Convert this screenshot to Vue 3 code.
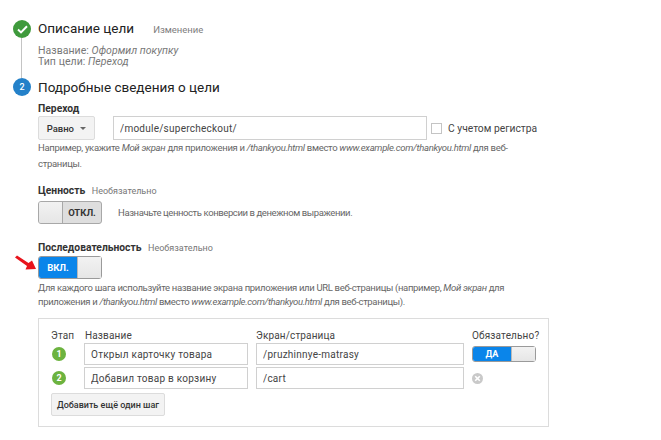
<template>
  <div class="page">
    <section class="step first">
      <div class="rail">
        <span class="dot done">
          <svg width="11" height="9" viewBox="0 0 11 9"><path d="M1 4.6 4 7.4 10 1.2" fill="none" stroke="#fff" stroke-width="2" /></svg>
        </span>
        <span class="line"></span>
      </div>
      <div class="body">
        <div class="head">
          <h2>Описание цели</h2>
          <a class="edit">Изменение</a>
        </div>
        <p class="meta">Название: <i>Оформил покупку</i></p>
        <p class="meta">Тип цели: <i>Переход</i></p>
      </div>
    </section>

    <section class="step second">
      <div class="rail">
        <span class="dot num">2</span>
      </div>
      <div class="body">
        <h2>Подробные сведения о цели</h2>

        <div class="label goal-label">Переход</div>
        <div class="match-row">
          <button class="select">Равно <span class="caret"></span></button>
          <input class="text url" value="/module/supercheckout/" />
          <span class="check"></span>
          <span class="check-label">С учетом регистра</span>
        </div>
        <p class="help first-help">Например, укажите <i>Мой экран</i> для приложения и <i>/thankyou.html</i> вместо <i>www.example.com/thankyou.html</i> для веб-<br />страницы.</p>

        <div class="label value-label">Ценность <span class="opt">Необязательно</span></div>
        <div class="value-row">
          <div class="toggle off">
            <span class="knob"></span>
            <span class="state">ОТКЛ.</span>
          </div>
          <span class="value-note">Назначьте ценность конверсии в денежном выражении.</span>
        </div>

        <div class="label seq-label">Последовательность <span class="opt">Необязательно</span></div>
        <div class="toggle on">
          <span class="state">ВКЛ.</span>
          <span class="knob"></span>
          <svg class="arrow" width="24" height="17" viewBox="0 0 24 17">
            <path d="M1 2.5 3 .5 14.5 8 18 5.5 22 14 11.5 14.5 13 11Z" fill="#e8141c" />
          </svg>
        </div>
        <p class="help seq-help">Для каждого шага используйте название экрана приложения или URL веб-страницы (например, <i>Мой экран</i> для<br />приложения и <i>/thankyou.html</i> вместо <i>www.example.com/thankyou.html</i> для веб-страницы).</p>

        <div class="steps-box">
          <div class="grid">
            <span class="col">Этап</span>
            <span class="col name-col">Название</span>
            <span class="col">Экран/страница</span>
            <span class="col">Обязательно?</span>

            <template v-for="(row, i) in rows" :key="i">
              <span class="badge-cell"><span class="badge">{{ i + 1 }}</span></span>
              <input class="text cell" :value="row.name" />
              <input class="text cell" :value="row.path" />
              <span class="end-cell">
                <span v-if="i === 0" class="toggle on small">
                  <span class="state">ДА</span>
                  <span class="knob"></span>
                </span>
                <svg v-else class="remove" width="11" height="11" viewBox="0 0 11 11">
                  <circle cx="5.5" cy="5.5" r="5.5" fill="#c9c9c9" />
                  <path d="M3.2 3.2 7.8 7.8M7.8 3.2 3.2 7.8" stroke="#fff" stroke-width="1.6" />
                </svg>
              </span>
            </template>
          </div>
          <button class="add">Добавить ещё один шаг</button>
        </div>
      </div>
    </section>
  </div>
</template>

<script setup>
const rows = [
  { name: 'Открыл карточку товара', path: '/pruzhinnye-matrasy' },
  { name: 'Добавил товар в корзину', path: '/cart' }
]
</script>

<style>
html, body { background: #fff; overflow: hidden; }
</style>

<style scoped>
.page {
  width: 661px;
  height: 440px;
  overflow: hidden;
  box-sizing: border-box;
  padding: 20px 0 0 13px;
  font-family: Roboto, "Liberation Sans", sans-serif;
  font-size: 11px;
  color: #444;
  background: #fff;
}
.step { display: flex; }
.first { height: 58px; }
.rail {
  width: 25px;
  flex: none;
  display: flex;
  flex-direction: column;
}
.dot {
  width: 18px;
  height: 18px;
  border-radius: 50%;
  display: flex;
  align-items: center;
  justify-content: center;
  flex: none;
  color: #fff;
  font-size: 9px;
  font-weight: 500;
}
.done { background: #3f9a3c; }
.num { background: #2481c9; }
.line {
  width: 1px;
  flex: 1;
  margin-left: 8px;
  background: #c4c4c4;
}
.body { flex: 1; min-width: 0; }
h2 {
  margin: 0;
  font-size: 13.5px;
  font-weight: 400;
  line-height: 19px;
  color: #222;
}
.head { display: flex; align-items: center; gap: 19px; margin-top: -1px; }
.edit { font-size: 9.5px; color: #7d7d7d; padding-top: 2px; }
.meta {
  margin: 0;
  line-height: 11px;
  font-size: 10.5px;
  color: #777;
  letter-spacing: 0.05px;
}
.head + .meta { margin-top: 7px; }
.label {
  font-weight: 700;
  font-size: 10.3px;
  line-height: 13px;
  color: #333;
}
.opt { font-weight: 400; color: #777; margin-left: 4px; font-size: 9px; }
.goal-label { margin-top: 5px; }
.match-row { display: flex; align-items: center; margin-top: 1px; }
.select {
  width: 57px;
  height: 24px;
  padding: 0;
  border: 1px solid #dcdcdc;
  border-radius: 2px;
  background: #f3f3f3;
  font: 500 9.5px Roboto, sans-serif;
  color: #333;
  margin-right: 18px;
}
.caret {
  display: inline-block;
  margin-left: 4px;
  vertical-align: middle;
  border: 3px solid transparent;
  border-top-color: #666;
  border-bottom: 0;
}
.text {
  box-sizing: border-box;
  height: 24px;
  border: 1px solid #d0d0d0;
  background: #fff;
  padding: 0 6px;
  font: 10px Roboto, sans-serif;
  letter-spacing: 0.25px;
  color: #444;
  outline: 0;
}
.url { width: 314px; }
.check {
  width: 9px;
  height: 9px;
  border: 1px solid #c4c4c4;
  margin: 0 6px 0 4px;
}
.check-label { color: #444; font-size: 10.3px; }
.help {
  margin: 0;
  font-size: 9.5px;
  letter-spacing: -0.3px;
  color: #666;
}
.first-help { line-height: 16px; margin-top: 0; }
.value-label { margin-top: 12px; }
.value-row { display: flex; align-items: center; margin-top: 3px; }
.value-note { margin-left: 16px; color: #666; font-size: 9.5px; letter-spacing: -0.4px; }
.toggle {
  position: relative;
  box-sizing: border-box;
  display: flex;
  width: 64px;
  height: 23px;
  border: 1px solid #a8a8a8;
  border-radius: 3px;
  font-size: 9.5px;
  font-weight: 700;
}
.toggle .knob {
  background: linear-gradient(#f2f2f2, #e6e6e6);
  flex: 1;
}
.toggle .state {
  display: flex;
  align-items: center;
  justify-content: center;
}
.off { background: #dedede; }
.off .knob { border-right: 1px solid #a8a8a8; border-radius: 2px 0 0 2px; }
.off .state { width: 38px; color: #333; }
.on { border-color: #9a9a9a; }
.on .state {
  width: 38px;
  background: #0a85ea;
  color: #fff;
  border-radius: 2px 0 0 2px;
}
.on .knob { border-left: 1px solid #b9b9b9; }
.arrow { position: absolute; left: -25px; top: -2px; }
.seq-label { margin-top: 17px; }
.seq-label + .toggle { margin-top: 1px; }
.seq-help { line-height: 14px; margin-top: 2px; letter-spacing: -0.33px; }
.steps-box {
  box-sizing: border-box;
  width: 511px;
  height: 109px;
  margin-top: 9px;
  padding: 12px 0 0 12px;
  border: 1px solid #dcdcdc;
}
.grid {
  display: grid;
  grid-template-columns: 33px 164px 216px 72px;
  grid-template-rows: 10px 22px 22px;
  column-gap: 0;
  row-gap: 2px;
}
.grid > :nth-child(4n + 3),
.grid > :nth-child(4n + 4) { margin-left: 8px; }
.col { font-size: 10px; line-height: 10px; color: #444; letter-spacing: 0.15px; white-space: nowrap; }
.name-col { margin-left: 1px; }
.badge-cell, .end-cell { display: flex; align-items: center; }
.badge {
  width: 14px;
  height: 14px;
  border-radius: 50%;
  background: #6cb33f;
  color: #fff;
  font-size: 9px;
  font-weight: 700;
  display: flex;
  align-items: center;
  justify-content: center;
  margin-left: 1px;
}
.cell { width: auto; min-width: 0; height: 22px; padding: 0 6px; }
.small { width: 64px; height: 16px; font-size: 9px; }
.remove { margin-left: 0; }
.add {
  display: block;
  width: 114px;
  height: 23px;
  margin: 4px 0 0 0;
  padding: 0;
  border: 1px solid #dcdcdc;
  border-radius: 2px;
  background: #f3f3f3;
  font: 500 9px Roboto, sans-serif;
  white-space: nowrap;
  color: #333;
}
</style>
